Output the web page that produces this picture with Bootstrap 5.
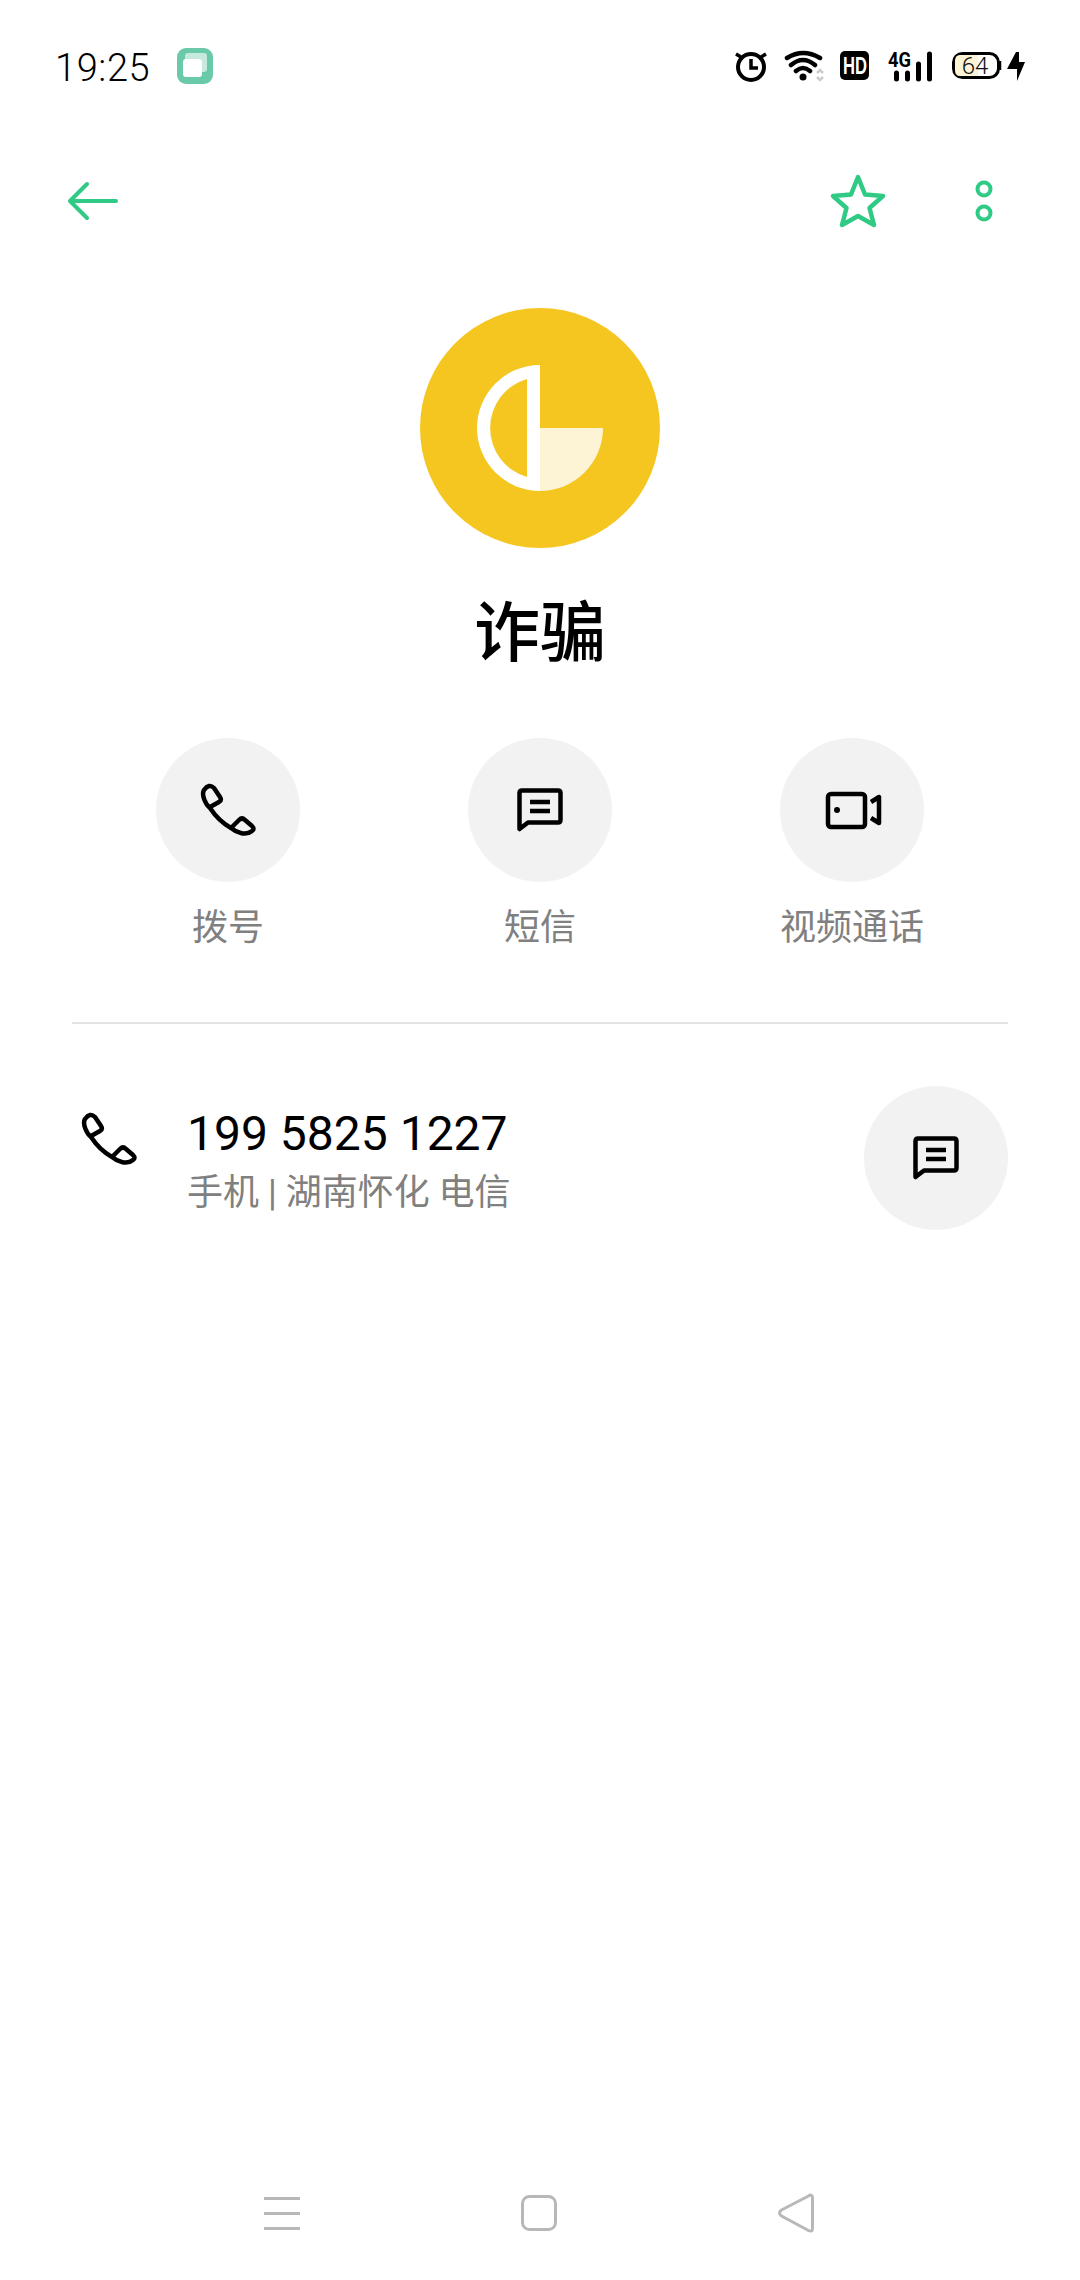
<!DOCTYPE html>
<html lang="zh-CN">

<head>
  <meta charset="UTF-8" />
  <meta name="viewport" content="width=device-width, initial-scale=1" />
  <title>诈骗</title>
  <link href="https://cdn.jsdelivr.net/npm/bootstrap@5.3.0/dist/css/bootstrap.min.css" rel="stylesheet" />
  <style>
    body {
      background-color: #fff;
      font-family: Roboto, "Noto Sans CJK SC", sans-serif;
    }

    .screen {
      width: 1080px;
      height: 2280px;
      overflow: hidden;
    }

    .status-strip {
      height: 84px;
      padding: 48px 54px 0 55px;
    }

    .clock-text {
      font-size: 38px;
      line-height: 36px;
      font-weight: 300;
      letter-spacing: 0.6px;
      color: #000;
      padding-top: 4px;
    }

    .app-chip {
      margin-left: 27px;
    }

    .status-icons {
      gap: 14px;
    }

    .tool-strip {
      margin-top: 86px;
      height: 62px;
      padding: 0 86px 0 67px;
    }

    .tool-right {
      gap: 87px;
    }

    .avatar-wrap {
      margin-top: 76px;
    }

    .contact-name {
      margin: 52px 0 0;
      font-size: 66px;
      line-height: 68px;
      font-weight: 500;
      color: #000;
    }

    .action-row {
      margin: 70px 72px 0;
    }

    .round-btn {
      width: 144px;
      height: 144px;
      border: 0;
      background-color: #f2f2f2;
    }

    .action-label {
      margin-top: 22px;
      font-size: 36px;
      line-height: 48px;
      color: #808080;
    }

    .rule-line {
      margin: 70px 72px 0;
      height: 2px;
      background-color: #e3e3e3;
      opacity: 1;
      border: 0;
    }

    .number-row {
      margin-top: 62px;
      padding: 0 72px;
    }

    .number-icon {
      margin-right: 50px;
      margin-left: 9px;
      margin-top: -38px;
    }

    .number-block {
      padding-top: 8px;
    }

    .number-text {
      font-size: 48px;
      line-height: 56px;
      color: #000;
    }

    .number-meta {
      margin-top: 6px;
      font-size: 36px;
      line-height: 50px;
      color: #808080;
    }

    .nav-strip {
      margin-top: auto;
      padding: 0 266px 47px 264px;
    }
  </style>
</head>

<body>
  <svg width="0" height="0" class="position-absolute">
    <symbol id="ic-phone" viewBox="10 7 56 56">
      <path d="M14 15Q19 8 24 13L30 22Q32 25 29 27L20 32M14 15C11 20 16 30 20 33C26 42 32 48 41 53C47 58 56 61 62 56Q65 54 62 51L55 45Q52 42 49 45L41 53" fill="none" stroke="#000" stroke-width="4.500" stroke-linejoin="round" stroke-linecap="round" />
    </symbol>
    <symbol id="ic-message" viewBox="0 0 80 70">
      <path d="M19.500 54V18Q19.500 15.500 22 15.500H58Q60.500 15.500 60.500 18V45Q60.500 47.500 58 47.500H28Z" fill="none" stroke="#000" stroke-width="4.500" stroke-linejoin="round" />
      <path d="M30 27H50M30 36H50" stroke="#000" stroke-width="4.500" />
    </symbol>
    <symbol id="ic-video" viewBox="-3 0 80 70">
      <rect x="13" y="19" width="37" height="33" rx="3" fill="none" stroke="#000" stroke-width="4.500" />
      <circle cx="22" cy="35" r="3" fill="#000" />
      <path d="M56 27L64 22V48L56 43" fill="none" stroke="#000" stroke-width="4.500" stroke-linejoin="round" />
    </symbol>
  </svg>

  <div class="screen d-flex flex-column">
    <div class="status-strip d-flex align-items-center">
      <span class="clock-text">19:25</span>
      <svg class="app-chip" width="36" height="36" viewBox="0 0 36 36">
        <rect width="36" height="36" rx="9" fill="#69c9a8" />
        <rect x="8" y="5" width="22" height="19" rx="3" fill="#c5eadd" />
        <rect x="6" y="11" width="19" height="18" rx="3" fill="#fff" />
      </svg>
      <div class="status-icons d-flex align-items-center ms-auto">
        <svg width="36" height="36" viewBox="733 48 36 36">
          <circle cx="751" cy="67" r="13" fill="none" stroke="#000" stroke-width="4" />
          <path d="M751 59V68H758M736 54L741 57M766 54L761 57" fill="none" stroke="#000" stroke-width="3.500" />
        </svg>
        <svg width="43" height="36" viewBox="783 48 43 36">
          <path d="M787 58Q803 48 820 58M791 65Q803 55 815 65M796 71Q803 65 810 71" fill="none" stroke="#000" stroke-width="4.500" stroke-linecap="round" />
          <circle cx="803" cy="77" r="3.500" fill="#000" />
          <path d="M817 73L820 70L823 73M817 77L820 80L823 77" fill="none" stroke="#ccc" stroke-width="2.500" />
        </svg>
        <svg width="30" height="36" viewBox="0 0 30 36">
          <rect y="3" width="29" height="29" rx="5" fill="#000" />
          <text x="15" y="26" text-anchor="middle" textLength="24" lengthAdjust="spacingAndGlyphs" font-family="Liberation Sans" font-weight="700" font-size="24" fill="#fff">HD</text>
        </svg>
        <svg width="50" height="36" viewBox="0 0 50 36">
          <text x="4" y="19" textLength="23" lengthAdjust="spacingAndGlyphs" font-family="Roboto" font-weight="700" font-size="20" fill="#000">4G</text>
          <path d="M12.500 25V31M23.500 25V31M34.500 16V31M45.500 6V31" stroke="#000" stroke-width="5" stroke-linecap="round" />
        </svg>
        <svg width="78" height="36" viewBox="0 0 78 36">
          <rect x="5.500" y="5.500" width="45" height="24" rx="9" fill="#fff" stroke="#000" stroke-width="3" />
          <path d="M12 7H30V28H12Q7 28 7 22V13Q7 7 12 7Z" fill="#fdf3d5" />
          <path d="M52 13V22" stroke="#000" stroke-width="2.500" />
          <text x="27" y="26" text-anchor="middle" font-family="Roboto" font-weight="300" font-size="24" fill="#111">64</text>
          <path d="M68 4H71V14H77L69 33V21H59Z" fill="#000" />
        </svg>
      </div>
    </div>

    <div class="tool-strip d-flex align-items-center justify-content-between">
      <svg width="52" height="40" viewBox="67 181 52 40">
        <path d="M116 201H70M87 184L70 201L87 218" fill="none" stroke="#2fca84" stroke-width="4" stroke-linecap="round" stroke-linejoin="round" />
      </svg>
      <div class="tool-right d-flex align-items-center">
        <svg width="58" height="56" viewBox="829 173 58 56">
          <path d="M858 177L865 194.500L883 196L869.500 208L874 225L858 216L842 225L846.500 208L833 196L851 194.500Z" fill="none" stroke="#2fca84" stroke-width="4.500" stroke-linejoin="round" />
        </svg>
        <svg width="20" height="44" viewBox="974 179 20 44">
          <circle cx="984" cy="189" r="6.500" fill="none" stroke="#2fca84" stroke-width="4" />
          <circle cx="984" cy="213" r="6.500" fill="none" stroke="#2fca84" stroke-width="4" />
        </svg>
      </div>
    </div>

    <div class="avatar-wrap text-center">
      <svg class="d-block mx-auto" width="240" height="240" viewBox="0 0 240 240">
        <circle cx="120" cy="120" r="120" fill="#f5c520" />
        <path d="M120 120H183A63 63 0 0 1 120 183Z" fill="#fdf3d5" />
        <path d="M120 57A63 63 0 0 0 120 183Z" fill="#fff" />
        <path d="M107 71A51 51 0 0 0 107 169Z" fill="#f5c520" />
      </svg>
      <h1 class="contact-name">诈骗</h1>
    </div>

    <div class="row g-0 action-row text-center">
      <div class="col-4">
        <button class="round-btn rounded-circle d-flex align-items-center justify-content-center mx-auto p-0" type="button">
          <svg width="56" height="56"><use href="#ic-phone" /></svg>
        </button>
        <div class="action-label">拨号</div>
      </div>
      <div class="col-4">
        <button class="round-btn rounded-circle d-flex align-items-center justify-content-center mx-auto p-0" type="button">
          <svg width="80" height="70"><use href="#ic-message" /></svg>
        </button>
        <div class="action-label">短信</div>
      </div>
      <div class="col-4">
        <button class="round-btn rounded-circle d-flex align-items-center justify-content-center mx-auto p-0" type="button">
          <svg width="80" height="70"><use href="#ic-video" /></svg>
        </button>
        <div class="action-label">视频通话</div>
      </div>
    </div>

    <hr class="rule-line" />

    <div class="number-row d-flex align-items-center">
      <svg class="number-icon flex-shrink-0" width="56" height="56"><use href="#ic-phone" /></svg>
      <div class="number-block flex-grow-1">
        <div class="number-text">199 5825 1227</div>
        <div class="number-meta">手机 | 湖南怀化 电信</div>
      </div>
      <button class="round-btn rounded-circle d-flex align-items-center justify-content-center p-0" type="button">
        <svg width="80" height="70"><use href="#ic-message" /></svg>
      </button>
    </div>

    <div class="nav-strip d-flex align-items-center justify-content-between">
      <svg width="36" height="40" viewBox="264 2194 36 40">
        <path d="M264 2199.500H300M264 2214.500H300M264 2229.500H300" stroke="#b8b8b8" stroke-width="3" />
      </svg>
      <svg width="36" height="40" viewBox="522 2194 36 40">
        <rect x="523.500" y="2197.500" width="33" height="33" rx="7" fill="none" stroke="#b8b8b8" stroke-width="3" />
      </svg>
      <svg width="36" height="40" viewBox="778 2194 36 40">
        <path d="M812.500 2199Q812.500 2194.500 808.500 2197L781.500 2211Q777.500 2214 781.500 2217L808.500 2231.500Q812.500 2233.500 812.500 2229Z" fill="none" stroke="#b8b8b8" stroke-width="3" stroke-linejoin="round" />
      </svg>
    </div>
  </div>

  <script src="https://cdn.jsdelivr.net/npm/bootstrap@5.3.0/dist/js/bootstrap.bundle.min.js"></script>
</body>

</html>
